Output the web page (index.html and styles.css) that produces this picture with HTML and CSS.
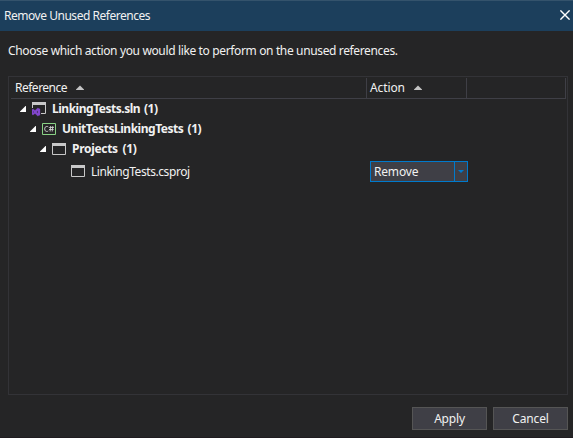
FILE: index.html
```html
<!DOCTYPE html>
<html lang="en">
<head>
<meta charset="utf-8">
<title>Remove Unused References</title>
<link rel="stylesheet" href="styles.css">
</head>
<body>
<div class="dialog">
  <header class="titlebar">
    <span class="t-title">Remove Unused References</span>
    <svg class="close" width="10" height="10" viewBox="0 0 10 10"><path d="M.4.4l9.2 9.2M9.6.4L.4 9.6" stroke="#fff" stroke-width="1.4"/></svg>
  </header>
  <main class="content">
    <p class="prompt"><span class="t-prompt">Choose which action you would like to perform on the unused references.</span></p>
    <section class="list">
      <div class="head">
        <div class="col col-ref"><span class="t-ref">Reference</span><svg class="sort" width="8" height="5" viewBox="0 0 8 5"><path d="M0 5v-.5L4 .5l4 4V5z" fill="#c4c4c4"/></svg></div>
        <div class="col col-action"><span class="t-action">Action</span><svg class="sort" width="8" height="5" viewBox="0 0 8 5"><path d="M0 5v-.5L4 .5l4 4V5z" fill="#c4c4c4"/></svg></div>
        <div class="col col-rest"></div>
      </div>
      <div class="row level1">
        <svg class="expander" width="6" height="6" viewBox="0 0 6 6"><path d="M5.500 0H6v6H0v-.5z" fill="#fff"/></svg>
        <svg class="icon solution" width="14" height="15" viewBox="0 0 14 15"><path d="M.5 6V.5h13v11H9" fill="none" stroke="#c8c8c8"/><path d="M0 0h14v3H0z" fill="#c8c8c8"/><path d="M0 7.500l1-.5 2 1.500L5.700 6 8 7v6l-2.300 1L3 11.500 1 13l-1-.5zM1 9v2l1-1zm5-.2L4.600 10 6 11.200z" fill="#8347cf" stroke="#8347cf" stroke-width=".3" fill-rule="evenodd"/></svg>
        <b class="t-sln">LinkingTests.sln&nbsp; (1)</b>
      </div>
      <div class="row level2">
        <svg class="expander" width="6" height="6" viewBox="0 0 6 6"><path d="M5.500 0H6v6H0v-.5z" fill="#fff"/></svg>
        <svg class="icon" width="14" height="12" viewBox="0 0 14 12"><path d="M.5.5h13v11H.5z" fill="none" stroke="#89d185"/><path d="M6.300 4Q5.800 3.400 4.800 3.400 2.700 3.500 2.600 6q.1 2.400 2.200 2.500 1 0 1.500-.6M8.700 3l-.6 5.500M10.800 3l-.6 5.500M7.200 4.500h4.700M7 6.500h4.700" fill="none" stroke="#d0d0d0" stroke-width=".9"/></svg>
        <b class="t-unit">UnitTestsLinkingTests&nbsp; (1)</b>
      </div>
      <div class="row level3">
        <svg class="expander" width="6" height="6" viewBox="0 0 6 6"><path d="M5.500 0H6v6H0v-.5z" fill="#fff"/></svg>
        <svg class="icon" width="14" height="12" viewBox="0 0 14 12"><path d="M.5.5h13v11H.5z" fill="none" stroke="#c8c8c8"/><path d="M0 0h14v3H0z" fill="#c8c8c8"/></svg>
        <b class="t-projects">Projects&nbsp; (1)</b>
      </div>
      <div class="row leaf">
        <div class="name">
          <svg class="icon" width="14" height="12" viewBox="0 0 14 12"><path d="M.5.5h13v11H.5z" fill="none" stroke="#c8c8c8"/><path d="M0 0h14v3H0z" fill="#c8c8c8"/></svg>
          <span class="t-csproj">LinkingTests.csproj</span>
        </div>
        <div class="combo"><div class="value"><span class="t-remove">Remove</span></div><div class="drop"><svg width="6" height="3" viewBox="0 0 6 3"><path d="M0 0h6L3 3z" fill="#007acc"/></svg></div></div>
      </div>
    </section>
    <footer class="buttons">
      <button class="button"><span class="t-apply">Apply</span></button>
      <button class="button"><span class="t-cancel">Cancel</span></button>
    </footer>
  </main>
</div>
</body>
</html>
```
FILE: styles.css
```css
* { box-sizing: border-box; }
body {
  margin: 0;
  background: #252526;
  color: #f1f1f1;
  font: 12px/16px "Noto Sans", "Open Sans", sans-serif;
  white-space: nowrap;
}
.dialog { height: 438px; display: flex; flex-direction: column; border-bottom: 1px solid #201c20; }
.titlebar {
  height: 31px;
  display: flex;
  align-items: center;
  justify-content: space-between;
  padding: 0 3px 0 4px;
  background: #1c3f5c;
  border-top: 1px solid #34536c;
}
svg { display: block; flex: none; }
.close { margin-bottom: 2px; }
.content { flex: 1; display: flex; flex-direction: column; padding: 12px 5px 7px 8px; }
.prompt { margin: 0; height: 33px; line-height: 16px; }
.list { width: 560px; height: 319px; border: 1px solid #333337; padding: 1px 1px 0 2px; }
.head { display: flex; height: 21px; border-bottom: 1px solid #3f3f46; }
.col { display: flex; align-items: center; border-right: 1px solid #3f3f46; }
.col-ref { width: 356px; padding-left: 4px; }
.col-action { width: 100px; padding-left: 3px; }
.col-rest { flex: 1; }
.sort { margin: 0 0 1px 9px; }
.row { display: flex; align-items: center; height: 20px; }
.icon { margin: 0 6px; }
.level1 { padding-left: 9px; }
.level2 { padding-left: 19px; }
.level3 { padding-left: 29px; }
.solution { margin-top: 1px; }
.leaf { height: 25px; padding-left: 54px; align-items: flex-start; }
.name { display: flex; align-items: center; width: 305px; margin-top: 4px; }
.combo { display: flex; width: 98px; height: 21px; margin-top: 2px; border: 1px solid #007acc; background: #3f3f46; }
.t-csproj { margin-top: 1px; margin-bottom: -1px; }
.value { flex: 1; padding-left: 3px; line-height: 19px; }
.drop { width: 13px; border-left: 1px solid #007acc; display: flex; align-items: center; justify-content: center; }
.buttons { display: flex; justify-content: flex-end; gap: 6px; margin-top: 12px; }
.button { width: 75px; height: 23px; padding: 0; border: 1px solid #555; background: #3f3f46; color: inherit; font: inherit; }
.t-title { letter-spacing: -.47px; }
.t-prompt { letter-spacing: -.36px; }
.t-ref { letter-spacing: -.5px; }
.t-action { letter-spacing: -.12px; }
.t-sln { letter-spacing: -.48px; word-spacing: -.7px; }
.t-unit { letter-spacing: -.47px; word-spacing: -.5px; }
.t-projects { letter-spacing: -.3px; word-spacing: -.5px; }
.t-csproj { letter-spacing: -.42px; }
.t-remove, .t-apply, .t-cancel { letter-spacing: -.18px; }
```
